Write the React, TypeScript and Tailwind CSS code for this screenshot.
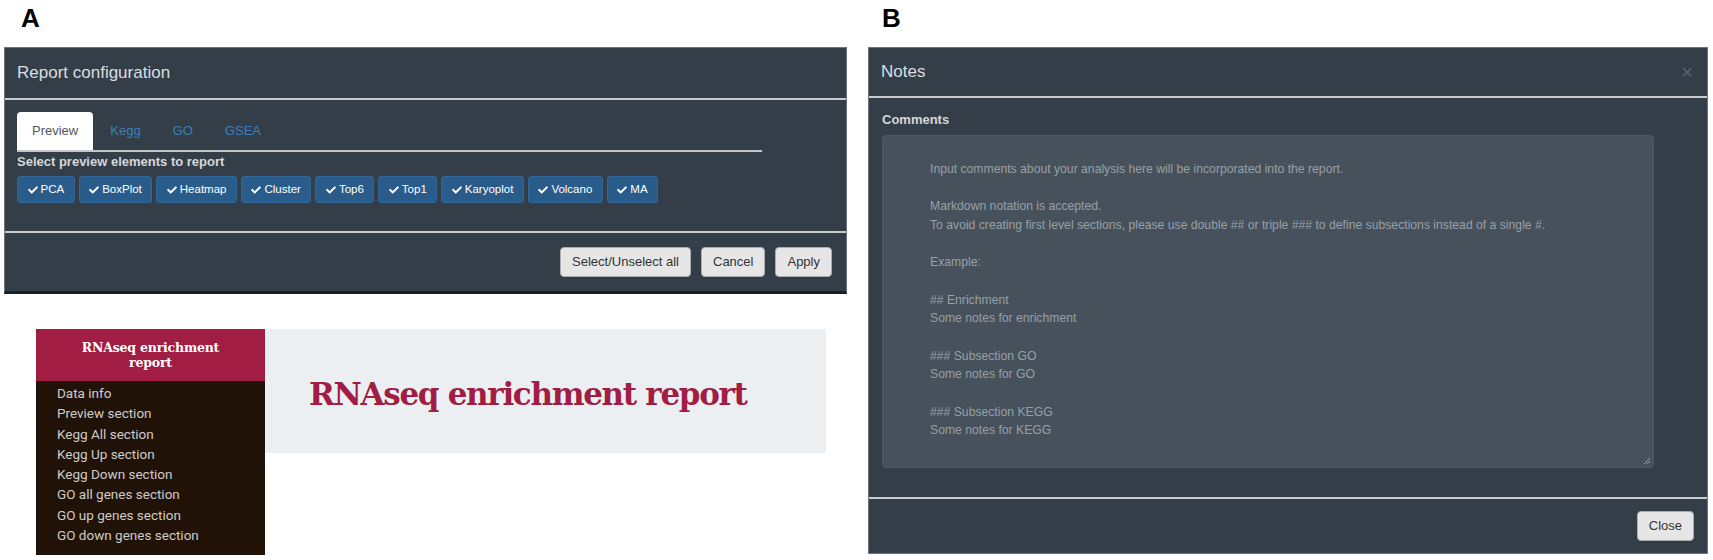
import { FaCheck } from 'react-icons/fa'

const chips = ['PCA', 'BoxPlot', 'Heatmap', 'Cluster', 'Top6', 'Top1', 'Karyoplot', 'Volcano', 'MA']
const tabs = ['Preview', 'Kegg', 'GO', 'GSEA']
const sections = [
  'Data info',
  'Preview section',
  'Kegg All section',
  'Kegg Up section',
  'Kegg Down section',
  'GO all genes section',
  'GO up genes section',
  'GO down genes section'
]

const notes = `Input comments about your analysis here will be incorporated into the report.

Markdown notation is accepted.
To avoid creating first level sections, please use double ## or triple ### to define subsections instead of a single #.

Example:

## Enrichment
Some notes for enrichment

### Subsection GO
Some notes for GO

### Subsection KEGG
Some notes for KEGG`

const sans = "font-['Liberation_Sans',Arial,sans-serif]"
const slab = "font-['DejaVu_Serif',serif]"

function GrayButton({ label }: { label: string }) {
  return (
    <button className="h-[30px] px-[11px] rounded-[4px] bg-[#e6e6e6] border border-[#a9abad] text-[13px] text-[#333]">
      {label}
    </button>
  )
}

export default function App() {
  return (
    <div className={`flex w-[1713px] h-[560px] bg-white overflow-hidden ${sans}`}>
      {/* Panel A */}
      <div className="w-[864px] flex flex-col">
        <div className="h-[47px] pt-[5px] pl-[21px] text-[26px] leading-none font-bold text-black">A</div>

        <div className="ml-[4px] w-[843px] h-[247px] flex flex-col bg-[#343e48] border border-[#6b737b] border-b-[3px] border-b-[#1c2126]">
          <div className="h-[50px] flex items-center px-[12px] text-[17px] text-[#dadde0]">Report configuration</div>
          <div className="h-[2px] bg-[#c9ccce]" />

          <div className="h-[131px] px-[12px] pt-[12px]">
            <div className="w-[745px] flex gap-[2px] border-b-2 border-[#c2c6c9]">
              {tabs.map((t, i) => (
                <div
                  key={t}
                  className={
                    i === 0
                      ? 'h-[38px] px-[15px] flex items-center rounded-t-[4px] bg-white text-[13px] text-[#555]'
                      : 'h-[38px] px-[15px] flex items-center text-[13px] text-[#3a80ba]'
                  }
                >
                  {t}
                </div>
              ))}
            </div>
            <div className="mt-[2px] text-[13px] leading-[15px] font-bold text-[#d5d8db]">Select preview elements to report</div>
            <div className="mt-[7px] flex gap-[4px]">
              {chips.map((c) => (
                <div
                  key={c}
                  className="h-[27px] px-[9.5px] flex items-center gap-[3px] rounded-[3px] bg-[#295c8b] border border-[#32679a] text-[11.5px] text-white"
                >
                  <FaCheck className="w-[10px] h-[10px]" />
                  {c}
                </div>
              ))}
            </div>
          </div>

          <div className="h-[2px] bg-[#c9ccce]" />
          <div className="flex-1 flex items-center justify-end gap-[10px] pr-[14px]">
            <GrayButton label="Select/Unselect all" />
            <GrayButton label="Cancel" />
            <GrayButton label="Apply" />
          </div>
        </div>

        {/* Report preview */}
        <div className="mt-[35px] ml-[36px] flex items-start">
          <div className="w-[229px] flex flex-col">
            <div className={`h-[52px] flex items-center justify-center text-center bg-[#a11d44] text-white text-[12.5px] leading-[15px] font-bold tracking-[-0.2px] ${slab}`}>
              RNAseq enrichment
              <br />
              report
            </div>
            <div className="h-[174px] bg-[#211208] pt-[2px] pl-[21px] font-['Roboto',sans-serif] text-[13.5px] leading-[20.3px] text-[#cfcbc8]">
              {sections.map((s) => (
                <div key={s}>{s}</div>
              ))}
            </div>
          </div>
          <div className="w-[561px] h-[124px] bg-[#eceff2] pl-[44px] pt-[45px]">
            <div className={`text-[31px] leading-[40px] font-bold text-[#a11d44] tracking-[-1.3px] ${slab}`}>
              RNAseq enrichment report
            </div>
          </div>
        </div>
      </div>

      {/* Panel B */}
      <div className="flex flex-col">
        <div className="h-[47px] pt-[5px] pl-[18px] text-[26px] leading-none font-bold text-black">B</div>

        <div className="ml-[4px] w-[840px] h-[507px] flex flex-col bg-[#343e48] border border-[#6b737b]">
          <div className="h-[48px] flex items-center justify-between pl-[12px] pr-[14px] text-[17px] text-[#dadde0]">
            <span>Notes</span>
            <span className="text-[20px] text-[#5d656e]">×</span>
          </div>
          <div className="h-[2px] bg-[#c9ccce]" />

          <div className="h-[399px] px-[13px] pt-[14px]">
            <div className="text-[13px] leading-[15px] font-bold text-[#d5d8db]">Comments</div>
            <div className="relative mt-[8px] w-[772px] h-[333px] rounded-[4px] bg-[#46515b] border border-[#4d5963] pl-[47px] pt-[24px] text-[12.2px] leading-[18.65px] text-[#97a0a8] whitespace-pre">
              {notes}
              <svg className="absolute right-[2px] bottom-[2px]" width="8" height="8" viewBox="0 0 8 8">
                <path d="M7 1 L1 7 M7 4 L4 7" stroke="#9aa3ab" strokeWidth="1" />
              </svg>
            </div>
          </div>

          <div className="h-[2px] bg-[#c9ccce]" />
          <div className="flex-1 flex items-center justify-end pr-[13px]">
            <GrayButton label="Close" />
          </div>
        </div>
      </div>
    </div>
  )
}
